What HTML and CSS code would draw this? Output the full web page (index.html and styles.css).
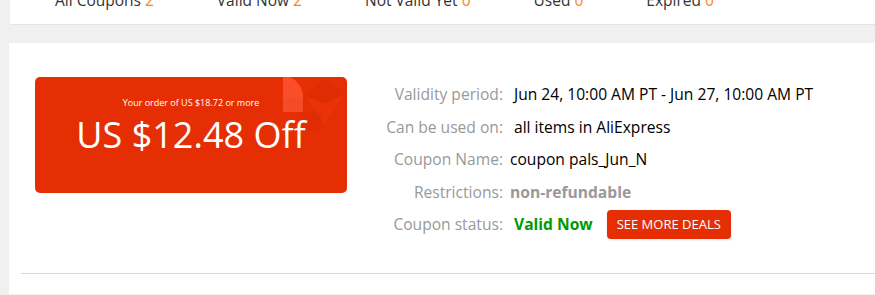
FILE: index.html
```html
<!DOCTYPE html>
<html>
<head>
<meta charset="utf-8">
<link rel="stylesheet" href="styles.css">
</head>
<body>
<div class="tabs-panel">
  <div class="tab-list">
    <span class="tab">All Coupons <em>2</em></span>
    <span class="tab">Valid Now <em>2</em></span>
    <span class="tab">Not Valid Yet <em>0</em></span>
    <span class="tab">Used <em>0</em></span>
    <span class="tab">Expired <em>0</em></span>
  </div>
</div>
<div class="main-panel">
  <div class="coupon-row">
    <div class="coupon">
      <svg class="coupon-deco" width="64" height="56" viewBox="0 0 64 56">
        <path d="M0 0 H7 C15 4 20 11 20 20 V35 H0 Z" fill="#ff5a36" opacity="0.75"/>
        <path d="M0 21 H20 V35 H0 Z" fill="#f04a25" opacity="0.55"/>
        <path d="M22 19 L43 2 L62 17 L42 27 Z" fill="#d42800" opacity="0.35"/>
        <path d="M22 19 L42 27 L62 17 L41 48 Z" fill="#ea3508" opacity="0.8"/>
        <path d="M17 35 H37 L41 48 L36 54 H17 Z" fill="#d42800" opacity="0.25"/>
      </svg>
      <div class="coupon-min">Your order of US $18.72 or more</div>
      <div class="coupon-amount">US $12.48 Off</div>
    </div>
    <div class="details">
      <div class="label">Validity period:</div>
      <div class="value">Jun 24, 10:00 AM PT - Jun 27, 10:00 AM PT</div>
      <div class="label">Can be used on:</div>
      <div class="value">all items in AliExpress</div>
      <div class="label">Coupon Name:</div>
      <div class="value value-tight">coupon pals_Jun_N</div>
      <div class="label">Restrictions:</div>
      <div class="value value-tight value-muted">non-refundable</div>
      <div class="label">Coupon status:</div>
      <div class="value status">
        <span class="status-valid">Valid Now</span>
        <a class="deals-btn">SEE MORE DEALS</a>
      </div>
    </div>
  </div>
  <div class="divider"></div>
</div>
</body>
</html>
```

FILE: styles.css
```css
html, body {
  margin: 0;
  padding: 0;
}
body {
  background: #f0f0f0;
  font-family: "Open Sans", "Liberation Sans", sans-serif;
  color: #000;
  height: 295px;
  overflow: hidden;
}
.tabs-panel {
  margin-left: 10px;
  height: 24px;
  background: #fff;
  border-bottom: 1px solid #e4e4e4;
  overflow: hidden;
}
.tab-list {
  display: flex;
  gap: 63px;
  padding-left: 45px;
  margin-top: -10px;
  font-size: 15.5px;
  line-height: 20px;
  color: #333;
  white-space: nowrap;
}
.tab em {
  font-style: normal;
  color: #f5841f;
}
.main-panel {
  margin-top: 18px;
  margin-left: 9px;
  background: #fff;
  padding: 34px 0 20px 0;
}
.coupon-row {
  display: flex;
  align-items: flex-start;
  gap: 26px;
  padding-left: 26px;
}
.coupon {
  position: relative;
  width: 312px;
  height: 116px;
  flex: none;
  box-sizing: border-box;
  background: #e62e04;
  border-radius: 5px;
  color: #fff;
  display: flex;
  flex-direction: column;
  align-items: center;
  padding-top: 20px;
  overflow: hidden;
}
.coupon-deco {
  position: absolute;
  top: 0;
  right: 0;
}
.coupon-min {
  position: relative;
  font-size: 9px;
  line-height: 12px;
}
.coupon-amount {
  position: relative;
  font-size: 36px;
  line-height: 44px;
  margin-top: 4px;
}
.details {
  display: grid;
  grid-template-columns: 130px auto;
  grid-auto-rows: 32.5px;
  column-gap: 11px;
  padding-top: 1px;
  font-size: 15.6px;
  align-items: center;
}
.label {
  text-align: right;
  color: #999;
  white-space: nowrap;
}
.value {
  white-space: nowrap;
  color: #000;
}
.value-tight {
  margin-left: -4px;
}
.value-muted {
  color: #999;
  font-weight: 700;
}
.status {
  display: flex;
  align-items: center;
  gap: 14px;
}
.status-valid {
  color: #009a00;
  font-weight: 700;
}
.deals-btn {
  display: inline-flex;
  align-items: center;
  height: 29px;
  padding: 0 10px;
  background: #e62e04;
  color: #fff;
  font-size: 13px;
  border-radius: 4px;
  box-shadow: 0 1px 2px rgba(230, 46, 4, 0.15);
}
.divider {
  margin: 32px 0 0 12px;
  border-top: 1px solid #d9d9d9;
}
```
